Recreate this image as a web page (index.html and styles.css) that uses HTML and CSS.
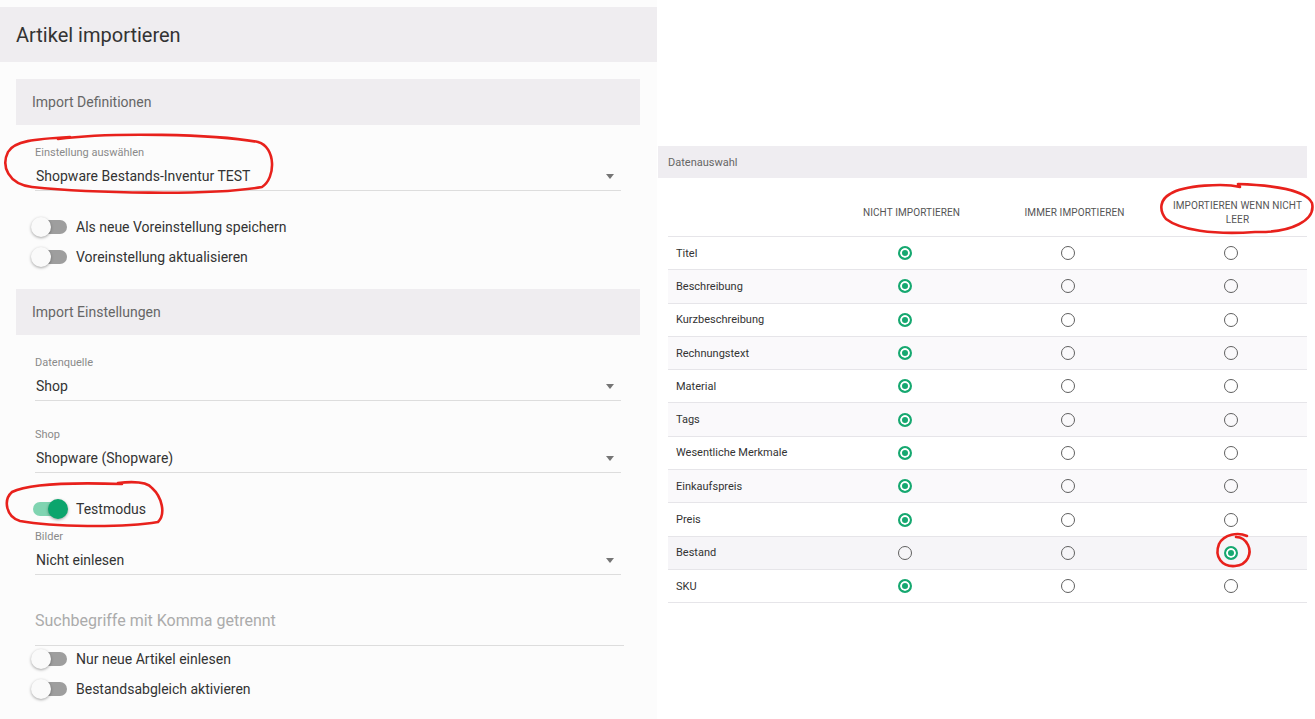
FILE: index.html
```html
<!DOCTYPE html>
<html lang="de">
<head>
<meta charset="utf-8">
<title>Artikel importieren</title>
<link rel="stylesheet" href="styles.css">
</head>
<body>
<div class="page">
  <div class="left">
    <div class="title-bar">Artikel importieren</div>
    <div class="left-body">
      <div class="section-bar sec1">Import Definitionen</div>

      <div class="field f1">
        <div class="field-label">Einstellung auswählen</div>
        <div class="field-value"><span>Shopware Bestands-Inventur TEST</span><span class="arrow"></span></div>
      </div>

      <div class="toggles t1">
        <div class="toggle-row"><span class="switch"><span class="knob"></span></span><span class="toggle-label">Als neue Voreinstellung speichern</span></div>
        <div class="toggle-row"><span class="switch"><span class="knob"></span></span><span class="toggle-label">Voreinstellung aktualisieren</span></div>
      </div>

      <div class="section-bar sec2">Import Einstellungen</div>

      <div class="field f2">
        <div class="field-label">Datenquelle</div>
        <div class="field-value"><span>Shop</span><span class="arrow"></span></div>
      </div>

      <div class="field f3">
        <div class="field-label">Shop</div>
        <div class="field-value"><span>Shopware (Shopware)</span><span class="arrow"></span></div>
      </div>

      <div class="toggles t2">
        <div class="toggle-row"><span class="switch on"><span class="knob"></span></span><span class="toggle-label">Testmodus</span></div>
      </div>

      <div class="field f4">
        <div class="field-label">Bilder</div>
        <div class="field-value"><span>Nicht einlesen</span><span class="arrow"></span></div>
      </div>

      <div class="text-field">Suchbegriffe mit Komma getrennt</div>

      <div class="toggles t3">
        <div class="toggle-row"><span class="switch"><span class="knob"></span></span><span class="toggle-label">Nur neue Artikel einlesen</span></div>
        <div class="toggle-row"><span class="switch"><span class="knob"></span></span><span class="toggle-label">Bestandsabgleich aktivieren</span></div>
      </div>
    </div>
  </div>

  <div class="right">
    <div class="data-bar">Datenauswahl</div>
    <div class="table">
      <div class="thead">
        <div class="th"></div>
        <div class="th">Nicht importieren</div>
        <div class="th">Immer importieren</div>
        <div class="th">Importieren wenn nicht leer</div>
      </div>
      <div class="row"><div class="name">Titel</div><span class="radio checked"></span><span class="radio"></span><span class="radio"></span></div>
      <div class="row"><div class="name">Beschreibung</div><span class="radio checked"></span><span class="radio"></span><span class="radio"></span></div>
      <div class="row"><div class="name">Kurzbeschreibung</div><span class="radio checked"></span><span class="radio"></span><span class="radio"></span></div>
      <div class="row"><div class="name">Rechnungstext</div><span class="radio checked"></span><span class="radio"></span><span class="radio"></span></div>
      <div class="row"><div class="name">Material</div><span class="radio checked"></span><span class="radio"></span><span class="radio"></span></div>
      <div class="row"><div class="name">Tags</div><span class="radio checked"></span><span class="radio"></span><span class="radio"></span></div>
      <div class="row"><div class="name">Wesentliche Merkmale</div><span class="radio checked"></span><span class="radio"></span><span class="radio"></span></div>
      <div class="row"><div class="name">Einkaufspreis</div><span class="radio checked"></span><span class="radio"></span><span class="radio"></span></div>
      <div class="row"><div class="name">Preis</div><span class="radio checked"></span><span class="radio"></span><span class="radio"></span></div>
      <div class="row hover"><div class="name">Bestand</div><span class="radio"></span><span class="radio"></span><span class="radio checked"></span></div>
      <div class="row"><div class="name">SKU</div><span class="radio checked"></span><span class="radio"></span><span class="radio"></span></div>
    </div>
  </div>
</div>

<svg class="annot" width="1315" height="719" viewBox="0 0 1315 719" xmlns="http://www.w3.org/2000/svg">
  <g fill="none" stroke="#e8211c" stroke-width="2.6" stroke-linecap="round" stroke-linejoin="round">
    <path d="M58 139 C110 132 215 134 258 142 C276 147 276 178 262 187 C210 196 90 193 32 187 C8 184 1 166 8 152 C14 141 34 139 70 137"/>
    <path d="M118 483 C136 481 148 483 152 488 C162 497 166 514 158 522 C122 528 52 527 20 521 C6 517 3 500 12 492 C26 485 62 482 122 484"/>
    <path d="M1170 194 C1184 185 1225 183 1240 187 L1238 184 C1272 185 1306 190 1312 203 C1316 220 1292 233 1255 232 C1213 235 1180 230 1166 219 C1158 209 1161 199 1170 194"/>
    <path d="M1247 536 C1238 532 1224 534 1219 544 C1214 557 1222 567 1235 566 C1248 565 1252 553 1248 545 C1245 539 1240 537 1236 537"/>
  </g>
</svg>
</body>
</html>
```
FILE: styles.css
```css
html, body {
  margin: 0;
  padding: 0;
}
body {
  font-family: Roboto, "Liberation Sans", Arial, sans-serif;
  background: #ffffff;
  width: 1315px;
  height: 719px;
  overflow: hidden;
  position: relative;
}
.page {
  display: flex;
  align-items: flex-start;
}

/* ---------- left card ---------- */
.left {
  width: 657px;
  flex: none;
  height: 719px;
  box-sizing: border-box;
  padding-top: 7px;
  background: #fcfcfc;
}
.title-bar {
  height: 55px;
  background: #efedf0;
  display: flex;
  align-items: center;
  padding-left: 16px;
  font-size: 20px;
  color: #333;
}
.left-body {
  padding: 0 17px 0 16px;
}
.section-bar {
  height: 46px;
  background: #efedf0;
  display: flex;
  align-items: center;
  padding-left: 16px;
  font-size: 14px;
  color: #666;
}
.sec1 { margin-top: 17px; }
.sec2 { margin-top: 17px; }

.field {
  margin-left: 19px;
  width: 586px;
  border-bottom: 1px solid #dddddd;
}
.field-label {
  font-size: 11px;
  line-height: 14px;
  color: #8a8a8a;
  padding-top: 1px;
}
.field-value {
  display: flex;
  align-items: center;
  justify-content: space-between;
  margin-top: 6px;
  padding: 0 7px 4px 1px;
  font-size: 14px;
  line-height: 20px;
  color: #333;
}
.arrow {
  width: 0;
  height: 0;
  border-left: 4px solid transparent;
  border-right: 4px solid transparent;
  border-top: 5px solid #757575;
}
.f1 { margin-top: 20px; }
.f2 { margin-top: 20px; }
.f3 { margin-top: 26px; }
.f4 { margin-top: 5px; }

.toggles { display: flex; flex-direction: column; }
.t1 { margin-top: 21px; }
.t2 { margin-top: 21px; }
.t3 { margin-top: 0; }
.toggle-row {
  height: 30px;
  display: flex;
  align-items: center;
}
.switch {
  width: 34px;
  height: 14px;
  border-radius: 7px;
  background: #9e9e9e;
  display: flex;
  align-items: center;
  margin-left: 17px;
  flex: none;
}
.knob {
  width: 20px;
  height: 20px;
  border-radius: 50%;
  background: #fafafa;
  box-shadow: 0 1px 3px rgba(0, 0, 0, 0.35);
  margin-left: -2px;
  flex: none;
}
.switch.on {
  background: #80d4b1;
  justify-content: flex-end;
}
.switch.on .knob {
  background: #0ca56d;
  margin-left: 0;
  margin-right: -1px;
}
.toggle-label {
  margin-left: 9px;
  font-size: 14px;
  color: #333;
}

.text-field {
  margin-top: 36px;
  margin-left: 19px;
  width: 589px;
  font-size: 16px;
  line-height: 20px;
  color: #ababab;
  padding-bottom: 14px;
  border-bottom: 1px solid #dddddd;
  margin-bottom: -2px;
}

/* ---------- right panel ---------- */
.right {
  flex: 1;
  padding-top: 146px;
}
.data-bar {
  margin-left: 1px;
  margin-right: 8px;
  height: 32px;
  background: #efedf1;
  display: flex;
  align-items: center;
  padding-left: 10px;
  font-size: 11px;
  color: #666;
}
.table {
  margin-top: 2px;
  margin-left: 11px;
  width: 639px;
  overflow: hidden;
}
.thead, .row {
  display: grid;
  grid-template-columns: 155px repeat(3, 163px);
  box-sizing: border-box;
  width: 644px;
}
.thead {
  height: 57px;
  border-bottom: 1px solid #e6e5e9;
}
.th {
  display: flex;
  align-items: center;
  justify-content: center;
  text-align: center;
  padding: 10px 9px 0 23px;
  font-size: 10px;
  line-height: 14px;
  color: #555;
  letter-spacing: 0.1px;
  text-transform: uppercase;
}
.row {
  height: 33.3px;
  border-bottom: 1px solid #e6e5e9;
  align-items: center;
  font-size: 11px;
  color: #333;
}
.row:nth-child(odd) {
  background: #faf9fb;
}
.row.hover {
  background: #f6f5f8;
}
.name {
  padding-left: 8px;
}
.radio {
  justify-self: center;
  width: 14px;
  height: 14px;
  box-sizing: border-box;
  border-radius: 50%;
  border: 1.5px solid #606060;
}
.radio.checked {
  border: 2px solid #16a870;
  background: #16a870;
  box-shadow: inset 0 0 0 2px #ffffff;
}

/* ---------- hand-drawn annotations ---------- */
.annot {
  position: absolute;
  left: 0;
  top: 0;
  pointer-events: none;
}
```
